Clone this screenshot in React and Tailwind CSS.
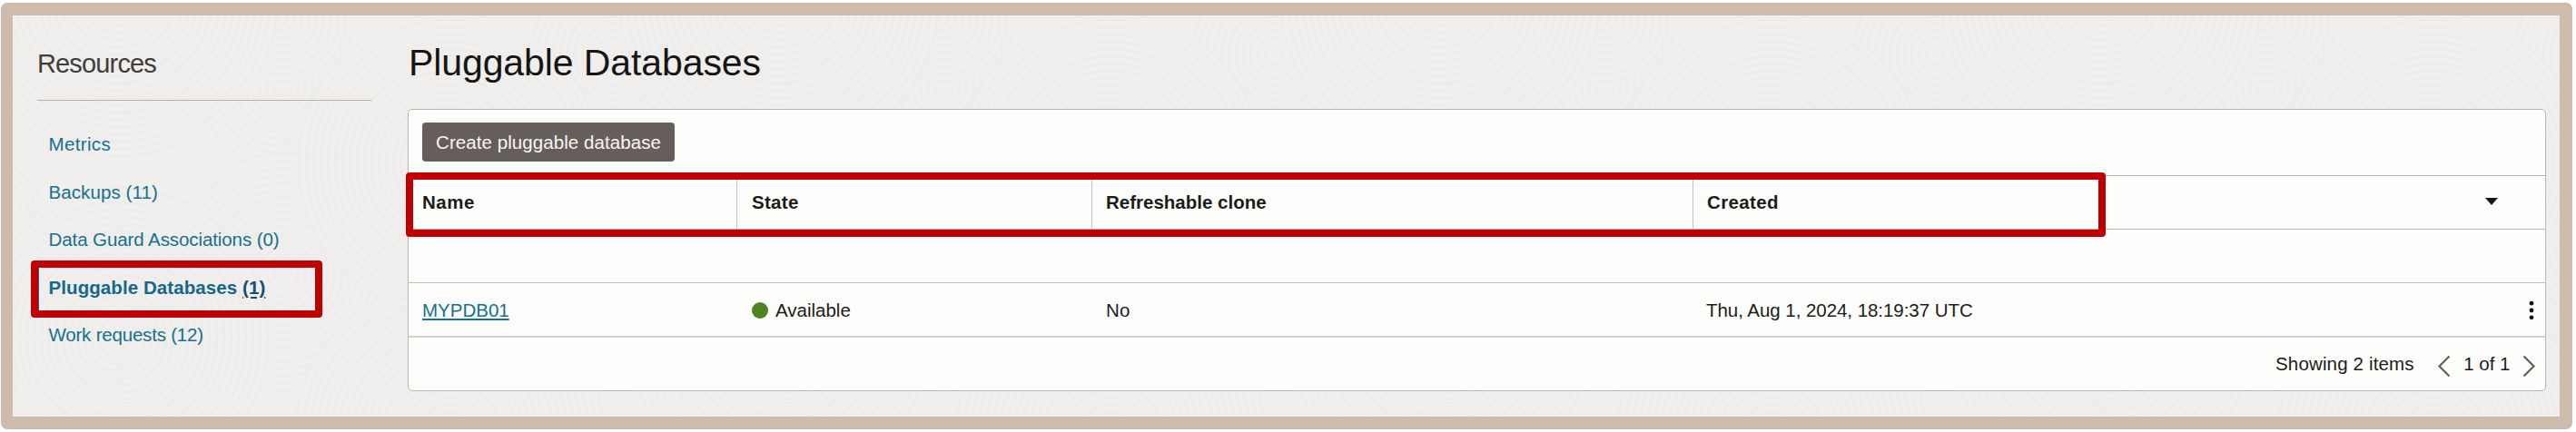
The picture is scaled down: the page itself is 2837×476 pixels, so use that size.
import React from "react";

const RING_GAP = 8;

const discs = [
  { cx: 311, cy: 95, r: 90 },
  { cx: 311, cy: 20, r: 70 },
  { cx: 675, cy: 60, r: 90 },
  { cx: 675, cy: 270, r: 110 },
  { cx: 311, cy: 300, r: 130 },
  { cx: 495, cy: 480, r: 170 },
  { cx: 130, cy: 372, r: 165 },
  { cx: 495, cy: 180, r: 166 },
  { cx: 130, cy: -4, r: 176 },
];

function Disc({ cx, cy, r }) {
  const rings = [];
  for (let q = r; q > 4; q -= RING_GAP) rings.push(q);
  return (
    <g>
      <circle cx={cx} cy={cy} r={r} fill="#f0efed" />
      {rings.map((q) => (
        <circle key={q} cx={cx} cy={cy} r={q} fill="none" stroke="#edecea" strokeWidth="3" />
      ))}
    </g>
  );
}

function Texture() {
  return (
    <svg className="absolute inset-0 h-full w-full" viewBox="14 17 2805 442" preserveAspectRatio="none" aria-hidden="true">
      {[-1, 0, 1, 2, 3].map((n) => (
        <g key={n} transform={`translate(${n * 728} 0)`}>
          {discs.map((d, i) => (
            <Disc key={i} {...d} />
          ))}
        </g>
      ))}
    </svg>
  );
}

function Highlight({ className }) {
  return <div className={`pointer-events-none absolute rounded-[4px] border-8 border-[#c00000] ${className}`} />;
}

function Sidebar() {
  return (
    <aside className="w-[368px] shrink-0">
      <h2 className="h-[94px] border-b border-[#b8b2aa] pt-[35px] text-[29px] leading-[36px] tracking-[-0.85px] text-[#403d3b]">
        Resources
      </h2>
      <nav className="flex flex-col pt-[22px] text-[20.5px] text-[#16708f]">
        <a className="flex h-[52.6px] items-center pl-[12.5px] tracking-[0.35px]">Metrics</a>
        <a className="flex h-[52.6px] items-center pl-[12.5px] tracking-[0.1px]">Backups (11)</a>
        <a className="flex h-[52.6px] items-center pl-[12.5px] tracking-[-0.09px]">Data Guard Associations (0)</a>
        <a className="relative flex h-[52.6px] items-center border-l-2 border-[#16668a] pl-[10.5px] font-bold tracking-[0.08px] text-[#146888]">
          <span className="whitespace-pre">
            Pluggable Databases <span className="text-[#13506e] underline decoration-2 underline-offset-[3px]">(1)</span>
          </span>
          <Highlight className="-left-[9px] -top-[3.5px] h-[63px] w-[321px]" />
        </a>
        <a className="flex h-[52.6px] items-center pl-[12.5px] tracking-[-0.2px]">Work requests (12)</a>
      </nav>
    </aside>
  );
}

const columns = "grid grid-cols-[362px_391px_662px_1fr]";

function DatabaseTable() {
  return (
    <section className="h-[311px] w-[2355px] rounded-[5px] border border-[#bab5b0] bg-[#fdfdfb] text-[20.5px] text-[#1c1b1a]">
      <div className="h-[72px] px-[15px] pt-[14px]">
        <button className="h-[43px] w-[278px] rounded-[4px] bg-[#665e5b] pt-[2px] text-[20.5px] tracking-[0.07px] text-[#f8f7f6]">
          Create pluggable database
        </button>
      </div>
      <div className={`${columns} relative h-[60px] items-stretch border-y border-[#bab5b0] font-bold`}>
        <div className="flex items-center border-r border-[#c8c4c0] pl-[15px] pt-px tracking-[0.5px]">Name</div>
        <div className="flex items-center border-r border-[#c8c4c0] pl-[16px] pt-px tracking-[0.3px]">State</div>
        <div className="flex items-center border-r border-[#c8c4c0] pl-[15px] pt-px">Refreshable clone</div>
        <div className="flex items-center justify-between pl-[15px] pr-[52px] pt-px">
          <span className="tracking-[0.35px]">Created</span>
          <svg className="-mt-[3px]" width="14" height="8" viewBox="0 0 14 8">
            <path d="M0 0H14L7 8Z" fill="#161513" />
          </svg>
        </div>
        <Highlight className="-left-[3px] -top-[4px] h-[71px] w-[1872px]" />
      </div>
      <div className="h-[59px] border-b border-[#c4c0bc]" />
      <div className={`${columns} h-[60px] items-center border-b-2 border-[#d3cfcc] pt-[2px]`}>
        <div className="pl-[15px]">
          <a className="text-[#16708f] underline decoration-[1.5px] underline-offset-[2px]">MYPDB01</a>
        </div>
        <div className="flex items-center gap-[8px] pl-[15.5px]">
          <span className="h-[18.5px] w-[18.5px] rounded-full bg-[#4f8322]" />
          Available
        </div>
        <div className="pl-[15px] tracking-[0.2px]">No</div>
        <div className="flex items-center justify-between pl-[14px] pr-[12px]">
          <span className="tracking-[-0.05px]">Thu, Aug 1, 2024, 18:19:37 UTC</span>
          <svg width="6" height="22" viewBox="0 0 6 22" fill="#161513">
            <circle cx="3" cy="3.2" r="2.4" />
            <circle cx="3" cy="11" r="2.4" />
            <circle cx="3" cy="18.8" r="2.4" />
          </svg>
        </div>
      </div>
      <div className="flex h-[58px] items-center justify-end pr-[10px] pt-px">
        <span className="mr-[25px] tracking-[0.15px]">Showing 2 items</span>
        <svg className="mt-[4px]" width="15" height="25" viewBox="0 0 15 25" fill="none" stroke="#665e5b" strokeWidth="2.2">
          <path d="M13.5 1.5L2.5 12.5L13.5 23.5" />
        </svg>
        <span className="ml-[14.5px] mr-[13.5px]">1 of 1</span>
        <svg className="mt-[4px]" width="15" height="25" viewBox="0 0 15 25" fill="none" stroke="#665e5b" strokeWidth="2.2">
          <path d="M1.5 1.5L12.5 12.5L1.5 23.5" />
        </svg>
      </div>
    </section>
  );
}

export default function App() {
  return (
    <div className="h-[476px] w-[2837px] overflow-hidden bg-white pl-px pt-[3px] font-['Liberation_Sans',Arial,sans-serif]">
      <div className="h-[470px] w-[2832px] rounded-[7px] bg-[#cdbbab] pb-[14px] pl-[13px] pr-[14px] pt-[14px]">
        <div className="relative h-full overflow-hidden bg-[#f0efed]">
          <Texture />
          <div className="relative flex h-full pl-[27px]">
            <Sidebar />
            <main className="ml-[40px]">
              <h1 className="h-[103px] pl-px pt-[27px] text-[41px] leading-[50px] tracking-[-0.1px] text-[#161513]">
                Pluggable Databases
              </h1>
              <DatabaseTable />
            </main>
          </div>
        </div>
      </div>
    </div>
  );
}
